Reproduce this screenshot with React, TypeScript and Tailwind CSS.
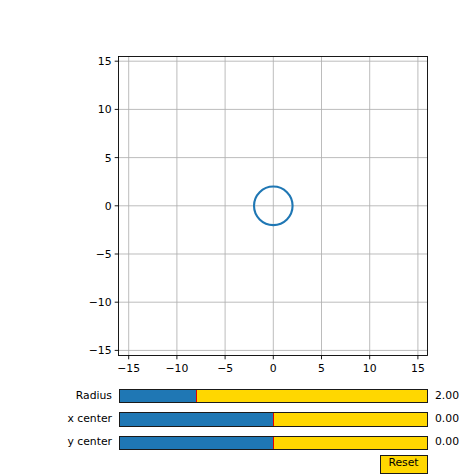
const FONT = '"DejaVu Sans", "Liberation Sans", sans-serif';

// axes geometry (px)
const AX = { left: 118.5, right: 427.5, top: 56.5, bottom: 355.5 };
const CX = 273.3;
const CY = 205.8;
const S = 9.64; // px per data unit

const ticks = [-15, -10, -5, 0, 5, 10, 15];
const fmt = (v: number) => (v < 0 ? "\u2212" + Math.abs(v) : String(v));

function Plot() {
  return (
    <svg width={474} height={389} className="block" style={{ fontFamily: FONT }}>
      {/* grid */}
      {ticks.map((t) => (
        <g key={t}>
          <line x1={CX + t * S} x2={CX + t * S} y1={AX.top} y2={AX.bottom} stroke="#b0b0b0" strokeWidth={0.85} />
          <line x1={AX.left} x2={AX.right} y1={CY - t * S} y2={CY - t * S} stroke="#b0b0b0" strokeWidth={0.85} />
        </g>
      ))}

      {/* circle */}
      <circle cx={CX} cy={CY} r={2 * S} fill="none" stroke="#1f77b4" strokeWidth={2.1} />

      {/* spines */}
      <rect
        x={AX.left}
        y={AX.top}
        width={AX.right - AX.left}
        height={AX.bottom - AX.top}
        fill="none"
        stroke="#000"
        strokeWidth={0.9}
      />

      {/* x ticks */}
      {ticks.map((t) => (
        <g key={"x" + t}>
          <line x1={CX + t * S} x2={CX + t * S} y1={AX.bottom} y2={AX.bottom + 3.8} stroke="#000" strokeWidth={0.9} />
          <text x={CX + t * S} y={372} textAnchor="middle" fontSize={10.8} fill="#000">
            {fmt(t)}
          </text>
        </g>
      ))}

      {/* y ticks */}
      {ticks.map((t) => (
        <g key={"y" + t}>
          <line x1={AX.left - 3.8} x2={AX.left} y1={CY - t * S} y2={CY - t * S} stroke="#000" strokeWidth={0.9} />
          <text x={111.6} y={CY - t * S + 3.9} textAnchor="end" fontSize={10.8} fill="#000">
            {fmt(t)}
          </text>
        </g>
      ))}
    </svg>
  );
}

function SliderRow({ label, frac, init, value }: { label: string; frac: number; init: number; value: string }) {
  return (
    <div className="flex items-center h-[14px]">
      <div className="w-[112px] pr-0 text-right text-[10.8px] leading-none text-black whitespace-nowrap">{label}</div>
      <div className="relative ml-[6.5px] w-[309px] h-[14.5px] bg-[#ffd700] border border-[#1a1a1a] overflow-hidden">
        <div className="h-full bg-[#1f77b4]" style={{ width: `${frac * 100}%` }} />
        <div className="absolute top-0 bottom-0 w-px bg-[#e00000]" style={{ left: `calc(${init * 100}% - 0.5px)` }} />
      </div>
      <div className="ml-[7.5px] text-[10.8px] leading-none text-black">{value}</div>
    </div>
  );
}

export default function App() {
  return (
    <div className="w-[474px] h-[474px] bg-white overflow-hidden" style={{ fontFamily: FONT }}>
      <Plot />

      {/* SLIDERS */}
      <div className="flex flex-col gap-[9.4px]">
        <SliderRow label="Radius" frac={0.252} init={0.252} value="2.00" />
        <SliderRow label="x center" frac={0.5} init={0.5} value="0.00" />
        <SliderRow label="y center" frac={0.5} init={0.5} value="0.00" />
      </div>

      {/** RESET BUTTON */}
      <div className="flex justify-end pr-[46.5px] mt-[5.5px]">
        <button className="w-[48px] h-[19px] bg-[#ffd700] border border-[#1a1a1a] text-[10.8px] leading-none text-black pb-[3px]">
          Reset
        </button>
      </div>
    </div>
  );
}
